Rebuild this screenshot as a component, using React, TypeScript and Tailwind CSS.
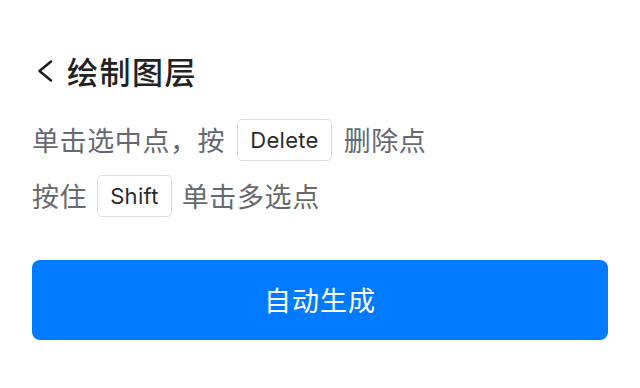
import React from "react";

function Kbd({ children }: { children: React.ReactNode }) {
  return (
    <span className="inline-flex h-[42px] items-center rounded-[5px] border border-[#d9dce1] px-[12px] text-[22px] tracking-[0.3px] text-[#2b2b2b] [font-family:Inter,'Noto_Sans_CJK_SC',sans-serif]">
      {children}
    </span>
  );
}

export default function App() {
  return (
    <div className="w-[640px] h-[388px] bg-white px-8 pt-[50px] [font-family:'Noto_Sans_CJK_SC','Noto_Sans',sans-serif]">
      <div className="flex h-10 items-center">
        <svg width="18" height="24" viewBox="0 0 18 24" className="ml-1 mt-[2px]" fill="none">
          <path d="M15 2.5L3.5 12 15 21.5" stroke="#1c1c1c" strokeWidth="2.5" strokeLinecap="round" strokeLinejoin="round" />
        </svg>
        <span className="ml-[13px] text-[31px] font-medium leading-none tracking-[1.5px] text-[#222222]">绘制图层</span>
      </div>
      <div className="mt-[29px] flex flex-col gap-[14px] text-[27px] tracking-[0.6px] text-[#666a70]">
        <div className="flex h-[42px] items-center gap-[12px]">
          <span>单击选中点，按</span>
          <Kbd>Delete</Kbd>
          <span>删除点</span>
        </div>
        <div className="flex h-[42px] items-center gap-[10px]">
          <span>按住</span>
          <Kbd>Shift</Kbd>
          <span>单击多选点</span>
        </div>
      </div>
      <button className="mt-[43px] flex h-20 w-full items-center justify-center rounded-lg bg-[#007bff] text-[27px] tracking-[1px] text-white">
        自动生成
      </button>
    </div>
  );
}
